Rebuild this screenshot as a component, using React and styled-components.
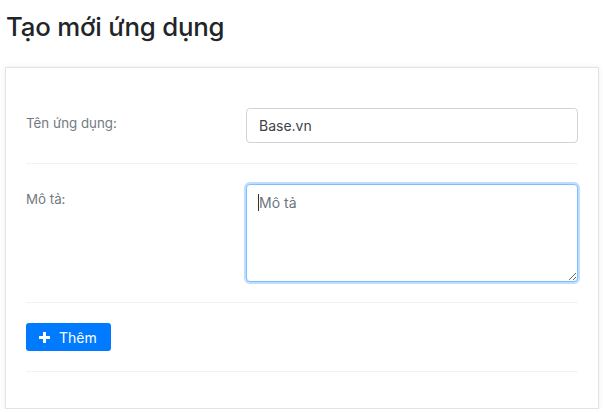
import React from "react";
import styled, { createGlobalStyle } from "styled-components";

const GlobalStyle = createGlobalStyle`
  body {
    margin: 0;
    background: #ffffff;
    font-family: "Inter", "Roboto", "Liberation Sans", sans-serif;
  }
`;

const Page = styled.div`
  padding: 10px 4px 0 5px;
`;

const Heading = styled.h1`
  margin: 0 0 23px 1px;
  font-size: 25.8px;
  line-height: 34px;
  font-weight: 500;
  color: #212529;
  letter-spacing: -0.2px;
`;

const Card = styled.div`
  background: #fff;
  border: 1px solid #dfe4e9;
  box-shadow: 0 0 6px rgba(0, 0, 0, 0.07);
  padding: 20px 20px 36px 20px;
`;

const Row = styled.div`
  display: grid;
  grid-template-columns: 220px 1fr;
  padding: 20px 0;
  border-bottom: 1px solid #eef5fa;
`;

const Label = styled.label`
  padding-top: 5px;
  font-size: 13.3px;
  line-height: 20px;
  color: #737a81;
`;

const Input = styled.input`
  box-sizing: border-box;
  width: 100%;
  height: 35px;
  padding: 0 12px;
  border: 1px solid #ced4da;
  border-radius: 4px;
  font-family: inherit;
  font-size: 14px;
  color: #3c4248;
  outline: none;
`;

const AreaWrap = styled.div`
  position: relative;
`;

const TextArea = styled.textarea`
  box-sizing: border-box;
  display: block;
  width: 100%;
  height: 98px;
  padding: 8px 12px;
  border: 1px solid ${(p) => (p.$focused ? "#80bdff" : "#ced4da")};
  border-radius: 4px;
  box-shadow: ${(p) =>
    p.$focused ? "0 0 0 2px rgba(0, 123, 255, 0.25)" : "none"};
  font-family: inherit;
  font-size: 14px;
  line-height: 20px;
  color: #495057;
  outline: none;
  resize: vertical;

  &::placeholder {
    color: #6c757d;
  }
`;

const Caret = styled.span`
  position: absolute;
  left: 12px;
  top: 10px;
  width: 1px;
  height: 17px;
  background: #333;
`;

const Button = styled.button`
  display: inline-flex;
  align-items: center;
  gap: 9px;
  height: 28px;
  padding: 0 14px 0 13px;
  border: none;
  border-radius: 3px;
  background: #007bff;
  color: #fff;
  font-family: inherit;
  font-size: 14px;
  cursor: pointer;
`;

const PlusIcon = () => (
  <svg width="11" height="11" viewBox="0 0 11 11">
    <path d="M4 0h3v4h4v3H7v4H4V7H0V4h4z" fill="#fff" />
  </svg>
);

export default function App() {
  return (
    <>
      <GlobalStyle />
      <Page>
        <Heading>Tạo mới ứng dụng</Heading>
        <Card>
          <Row>
            <Label>Tên ứng dụng:</Label>
            <Input defaultValue="Base.vn" />
          </Row>
          <Row>
            <Label>Mô tả:</Label>
            <AreaWrap>
              <TextArea $focused placeholder="Mô tả" />
              <Caret />
            </AreaWrap>
          </Row>
          <Row>
            <div>
              <Button>
                <PlusIcon />
                Thêm
              </Button>
            </div>
          </Row>
        </Card>
      </Page>
    </>
  );
}
